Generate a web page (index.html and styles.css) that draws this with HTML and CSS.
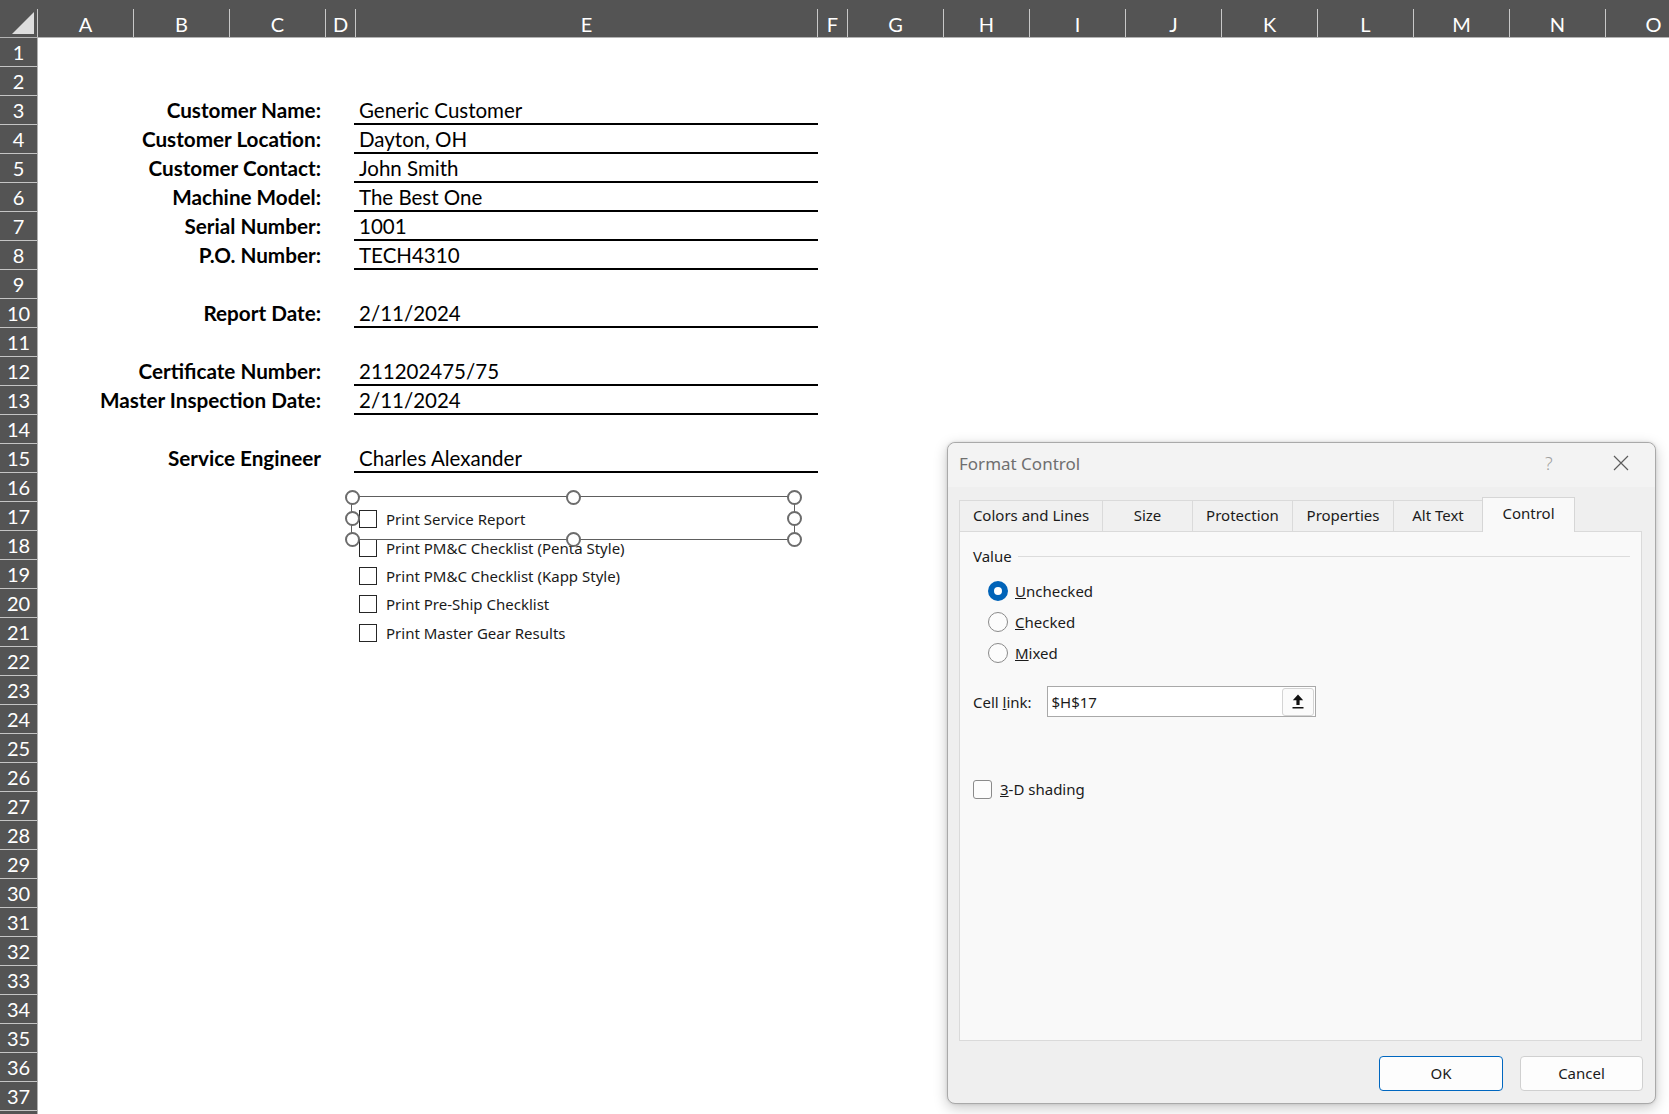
FILE: index.html
```html
<!DOCTYPE html>
<html>
<head>
<meta charset="utf-8">
<title>Excel - Format Control</title>
<link rel="stylesheet" href="styles.css">
</head>
<body>
<div class="excel">
  <div class="colhdr">
    <div class="corner"><svg width="22" height="22" viewBox="0 0 22 22"><polygon points="22,0 22,22 0,22" fill="#dedede"/></svg></div>
    <div class="ch w96">A</div>
    <div class="ch w96">B</div>
    <div class="ch w96">C</div>
    <div class="ch w30">D</div>
    <div class="ch w462">E</div>
    <div class="ch w30">F</div>
    <div class="ch w96">G</div>
    <div class="ch w86">H</div>
    <div class="ch w96">I</div>
    <div class="ch w96">J</div>
    <div class="ch w96">K</div>
    <div class="ch w96">L</div>
    <div class="ch w96">M</div>
    <div class="ch w96">N</div>
    <div class="ch w96">O</div>
  </div>
  <div class="main">
    <div class="rowhdr">
      <div class="rh">1</div><div class="rh">2</div><div class="rh">3</div><div class="rh">4</div>
      <div class="rh">5</div><div class="rh">6</div><div class="rh">7</div><div class="rh">8</div>
      <div class="rh">9</div><div class="rh">10</div><div class="rh">11</div><div class="rh">12</div>
      <div class="rh">13</div><div class="rh">14</div><div class="rh">15</div><div class="rh">16</div>
      <div class="rh">17</div><div class="rh">18</div><div class="rh">19</div><div class="rh">20</div>
      <div class="rh">21</div><div class="rh">22</div><div class="rh">23</div><div class="rh">24</div>
      <div class="rh">25</div><div class="rh">26</div><div class="rh">27</div><div class="rh">28</div>
      <div class="rh">29</div><div class="rh">30</div><div class="rh">31</div><div class="rh">32</div>
      <div class="rh">33</div><div class="rh">34</div><div class="rh">35</div><div class="rh">36</div>
      <div class="rh">37</div><div class="rh"></div>
    </div>
    <div class="sheet">
      <div class="form">
        <div class="lbl"></div><div class="val blank"></div>
        <div class="lbl"></div><div class="val blank"></div>
        <div class="lbl">Customer Name:</div><div class="val">Generic Customer</div>
        <div class="lbl">Customer Location:</div><div class="val">Dayton, OH</div>
        <div class="lbl">Customer Contact:</div><div class="val">John Smith</div>
        <div class="lbl">Machine Model:</div><div class="val">The Best One</div>
        <div class="lbl">Serial Number:</div><div class="val">1001</div>
        <div class="lbl">P.O. Number:</div><div class="val">TECH4310</div>
        <div class="lbl"></div><div class="val blank"></div>
        <div class="lbl">Report Date:</div><div class="val">2/11/2024</div>
        <div class="lbl"></div><div class="val blank"></div>
        <div class="lbl">Certificate Number:</div><div class="val">211202475/75</div>
        <div class="lbl">Master Inspection Date:</div><div class="val">2/11/2024</div>
        <div class="lbl"></div><div class="val blank"></div>
        <div class="lbl">Service Engineer</div><div class="val">Charles Alexander</div>
      </div>
      <div class="checks">
        <div class="chk"><span class="box"></span><span>Print Service Report</span></div>
        <div class="chk"><span class="box"></span><span>Print PM&amp;C Checklist (Penta Style)</span></div>
        <div class="chk"><span class="box"></span><span>Print PM&amp;C Checklist (Kapp Style)</span></div>
        <div class="chk"><span class="box"></span><span>Print Pre-Ship Checklist</span></div>
        <div class="chk"><span class="box"></span><span>Print Master Gear Results</span></div>
      </div>
    </div>
  </div>

  <div class="selection">
    <span class="hd h-tl"></span><span class="hd h-tc"></span><span class="hd h-tr"></span>
    <span class="hd h-ml"></span><span class="hd h-mr"></span>
    <span class="hd h-bl"></span><span class="hd h-bc"></span><span class="hd h-br"></span>
  </div>

  <div class="dialog">
    <div class="titlebar">
      <span class="dtitle">Format Control</span>
      <span class="help">?</span>
      <span class="close"><svg width="16" height="16" viewBox="0 0 16 16"><path d="M1 1 L15 15 M15 1 L1 15" stroke="#5c5c5c" stroke-width="1.2" fill="none"/></svg></span>
    </div>
    <div class="tabs">
      <div class="tab t1">Colors and Lines</div>
      <div class="tab t2">Size</div>
      <div class="tab t3">Protection</div>
      <div class="tab t4">Properties</div>
      <div class="tab t5">Alt Text</div>
      <div class="tab t6 active">Control</div>
    </div>
    <div class="panel">
      <div class="group"><span>Value</span><span class="gline"></span></div>
      <div class="radios">
        <div class="radio"><span class="rb on"></span><span><u>U</u>nchecked</span></div>
        <div class="radio"><span class="rb"></span><span><u>C</u>hecked</span></div>
        <div class="radio"><span class="rb"></span><span><u>M</u>ixed</span></div>
      </div>
      <div class="cellrow">
        <span class="cl">Cell <u>l</u>ink:</span>
        <div class="input">
          <span class="itext">$H$17</span>
          <span class="ibtn"><svg width="12" height="15" viewBox="0 0 12 15"><path d="M6 0.5 L11.2 6.2 H7.6 V11 H4.4 V6.2 H0.8 Z" fill="#111"/><rect x="0.5" y="13" width="11" height="1.5" fill="#111"/></svg></span>
        </div>
      </div>
      <div class="shade"><span class="cb"></span><span><u>3</u>-D shading</span></div>
    </div>
    <div class="buttons">
      <div class="btn ok">OK</div>
      <div class="btn cancel">Cancel</div>
    </div>
  </div>
</div>
</body>
</html>
```

FILE: styles.css
```css
* { box-sizing: border-box; }
html, body {
  margin: 0;
  padding: 0;
  width: 1669px;
  height: 1114px;
  overflow: hidden;
  background: #ffffff;
}
.excel {
  position: relative;
  width: 1669px;
  height: 1114px;
  overflow: hidden;
  font-family: Lato, "Liberation Sans", sans-serif;
}

/* column header */
.colhdr {
  display: flex;
  align-items: flex-end;
  height: 38px;
  background: #545454;
  border-bottom: 1px solid #b3b3b3;
  white-space: nowrap;
}
.corner {
  flex: 0 0 38px;
  height: 28px;
  border-right: 1px solid #c8c8c8;
  display: flex;
  align-items: flex-end;
  justify-content: flex-end;
  padding: 0 3px 3px 0;
}
.corner svg { display: block; }
.ch {
  flex: 0 0 auto;
  height: 28px;
  border-right: 1px solid #c8c8c8;
  color: #ffffff;
  font-size: 20px;
  line-height: 28px;
  padding-top: 1px;
  text-align: center;
}
.w96 { width: 96px; }
.w30 { width: 30px; }
.w86 { width: 86px; }
.w462 { width: 462px; }

.main { display: flex; }

/* row header */
.rowhdr {
  flex: 0 0 38px;
  background: #545454;
  border-right: 1px solid #b0b0b0;
}
.rh {
  height: 29px;
  border-bottom: 1px solid #c4c4c4;
  color: #ffffff;
  font-size: 20px;
  line-height: 28px;
  text-align: center;
}

.sheet { flex: 1; }

.form {
  display: grid;
  grid-template-columns: 96px 96px 96px 30px 462px;
  grid-auto-rows: 29px;
}
.lbl {
  grid-column: 1 / 4;
  text-align: right;
  padding-right: 5px;
  font-weight: 700;
  font-size: 20.7px;
  line-height: 29px;
  color: #000;
  white-space: nowrap;
}
.val {
  grid-column: 5;
  padding-left: 5px;
  font-size: 20.5px;
  line-height: 28px;
  color: #000;
  border-bottom: 2px solid #000;
  margin-left: -2px;
  white-space: nowrap;
}
.val.blank { border-bottom: none; }

/* form control check boxes */
.checks {
  margin-top: 32px;
  margin-left: 321px;
  font-family: "Noto Sans", "Open Sans", sans-serif;
  font-size: 15px;
  color: #1a1a1a;
}
.chk {
  height: 28.4px;
  display: flex;
  align-items: center;
  gap: 9px;
}
.chk .box {
  width: 18px;
  height: 18px;
  border: 1px solid #262626;
  background: #fff;
  flex: 0 0 18px;
}

/* selection handles over the first check box */
.selection {
  position: absolute;
  left: 351px;
  top: 496px;
  width: 444px;
  height: 44px;
  border: 1px solid #5e5e5e;
}
.hd {
  position: absolute;
  width: 15px;
  height: 15px;
  border-radius: 50%;
  border: 2.5px solid #6c6c6c;
  background: #fff;
  margin: -7.5px 0 0 -7.5px;
}
.h-tl { left: 0; top: 0; }
.h-tc { left: 50%; top: 0; }
.h-tr { left: 100%; top: 0; }
.h-ml { left: 0; top: 50%; }
.h-mr { left: 100%; top: 50%; }
.h-bl { left: 0; top: 100%; }
.h-bc { left: 50%; top: 100%; }
.h-br { left: 100%; top: 100%; }

/* dialog window */
.dialog {
  position: absolute;
  left: 947px;
  top: 442px;
  width: 709px;
  height: 662px;
  background: #efefef;
  border: 1px solid #a9a9a9;
  border-radius: 8px;
  box-shadow: 0 4px 14px rgba(0, 0, 0, 0.22), 0 0 3px rgba(0, 0, 0, 0.12);
  font-family: "Noto Sans", "Open Sans", sans-serif;
  font-size: 15px;
  color: #1b1b1b;
  display: flex;
  flex-direction: column;
}
.titlebar {
  height: 44px;
  flex: 0 0 44px;
  display: flex;
  align-items: center;
  padding: 0 0 4px 11px;
  background: #f3f3f3;
  border-radius: 8px 8px 0 0;
  position: relative;
}
.dtitle {
  font-size: 17px;
  color: #6f6f6f;
}
.help {
  position: absolute;
  left: 597px;
  top: 8px;
  font-size: 18px;
  color: #a0a0a0;
  font-weight: 300;
}
.close {
  position: absolute;
  left: 665px;
  top: 12px;
  width: 16px;
  height: 16px;
}
.close svg { display: block; }

.tabs {
  display: flex;
  align-items: flex-end;
  height: 34px;
  margin: 10px 0 0 11px;
  position: relative;
  z-index: 1;
}
.tab {
  height: 31px;
  line-height: 29px;
  text-align: center;
  background: #f0f0f0;
  border: 1px solid #dadada;
  border-bottom: none;
  margin-right: -1px;
  white-space: nowrap;
}
.t1 { width: 144px; }
.t2 { width: 91px; }
.t3 { width: 101px; }
.t4 { width: 102px; }
.t5 { width: 90px; }
.t6 { width: 93px; }
.tab.active {
  height: 35px;
  line-height: 31px;
  background: #f9f9f9;
  margin-bottom: -1px;
  border-color: #d6d6d6;
}

.panel {
  height: 510px;
  margin: 0 13px 0 11px;
  background: #f9f9f9;
  border: 1px solid #dadada;
  padding: 0 0 0 13px;
}
.group {
  display: flex;
  align-items: center;
  height: 22px;
  margin-top: 13px;
}
.gline {
  flex: 1;
  height: 1px;
  background: #dcdcdc;
  margin: 0 11px 0 6px;
}
.radios {
  margin-top: 8px;
  padding-left: 15px;
}
.radio {
  height: 31px;
  display: flex;
  align-items: center;
  gap: 7px;
}
.rb {
  width: 20px;
  height: 20px;
  flex: 0 0 20px;
  border-radius: 50%;
  border: 1px solid #8a8a8a;
  background: #fcfcfc;
}
.rb.on {
  border: 6px solid #0063b8;
  background: #ffffff;
}
.cellrow {
  margin-top: 18px;
  display: flex;
  align-items: center;
  height: 31px;
}
.cl {
  width: 73.5px;
  flex: 0 0 73.5px;
}
.input {
  width: 269px;
  height: 31px;
  border: 1px solid #a9a9a9;
  background: #ffffff;
  display: flex;
  align-items: center;
  justify-content: space-between;
  padding: 0 1px 0 4px;
}
.ibtn {
  width: 32px;
  height: 28px;
  border: 1px solid #d4d4d4;
  border-radius: 3px;
  background: #fbfbfb;
  display: flex;
  align-items: center;
  justify-content: center;
}
.ibtn svg { display: block; }
.shade {
  margin-top: 57px;
  height: 30px;
  display: flex;
  align-items: center;
  gap: 8px;
}
.cb {
  width: 19px;
  height: 19px;
  flex: 0 0 19px;
  border: 1px solid #8a8a8a;
  border-radius: 3px;
  background: #fcfcfc;
}

.buttons {
  display: flex;
  justify-content: flex-end;
  gap: 17px;
  margin-top: 15px;
  padding-right: 12px;
}
.btn {
  height: 35px;
  line-height: 33px;
  text-align: center;
  border-radius: 4px;
  background: #fdfdfd;
  border: 1px solid #d0d0d0;
}
.btn.ok {
  width: 124px;
  border-color: #0067c0;
}
.btn.cancel {
  width: 123px;
}
```
